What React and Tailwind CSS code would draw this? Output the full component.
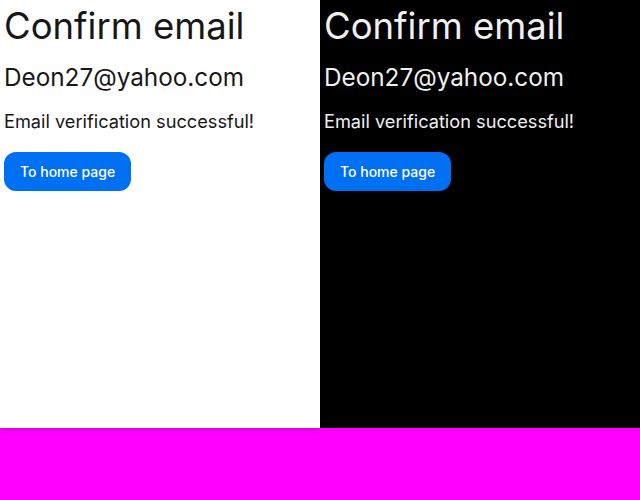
import React from 'react'

const Panel = ({ dark }) => (
  <div
    className={`flex flex-col items-start p-1 h-[428px] ${
      dark ? 'bg-black text-[#f0f0f0]' : 'bg-white text-[#171717] shadow-md'
    }`}
  >
    <h1 className="text-[36.5px] leading-[44px] mb-[13px]">Confirm email</h1>
    <h2 className="text-[24.3px] leading-[32px] mb-[16px]">Deon27@yahoo.com</h2>
    <p className="text-[18.2px] leading-[24px] mb-[19px]">Email verification successful!</p>
    <button className="h-[39px] px-4 rounded-xl bg-[#0070f3] text-white text-sm font-medium">
      To home page
    </button>
  </div>
)

export default function App() {
  return (
    <div className="min-h-[500px] bg-[#ff00ff] font-['Inter',sans-serif]">
      <div className="grid grid-cols-2">
        <Panel />
        <Panel dark />
      </div>
    </div>
  )
}
